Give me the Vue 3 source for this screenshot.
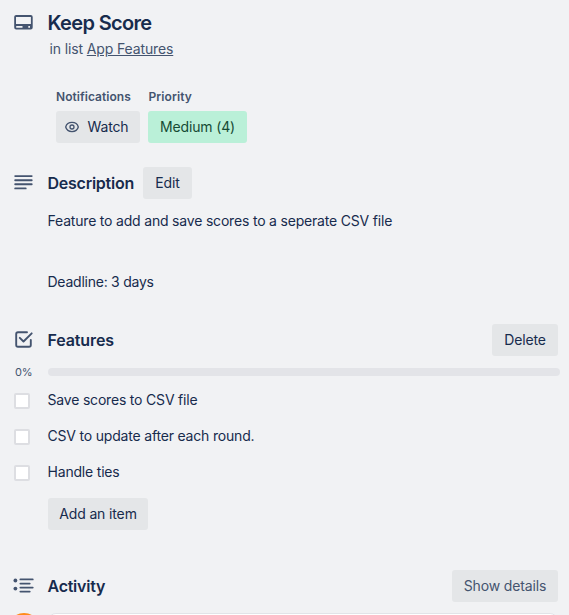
<script setup>
const items = ['Save scores to CSV file', 'CSV to update after each round.', 'Handle ties']
</script>

<template>
  <main class="card">
    <header class="head">
      <svg class="icon card-icon" viewBox="0 0 24 24" width="24" height="24">
        <path fill-rule="evenodd" d="M4.200 4h14.500a2 2 0 0 1 2 2v10.600a2 2 0 0 1-2 2H4.200a2 2 0 0 1-2-2V6c0-1.100.9-2 2-2Zm-.2 1.900v7.200h14.900V5.900H4Zm.2 9.100v1.700h6.300V15H4.200Zm12.100 0v1.700h1.700V15h-1.700Z" />
      </svg>
      <div>
        <h1><span>Keep Score</span></h1>
        <p class="sub"><span>in list <a>App Features</a></span></p>
      </div>
    </header>

    <section class="meta">
      <div>
        <h3><span>Notifications</span></h3>
        <button class="btn watch">
          <svg width="16" height="16" viewBox="0 0 16 16" fill="none" stroke="#44546f" stroke-width="1.300">
            <path d="M1.700 8C2.400 5.300 4.900 3.400 8 3.400S13.600 5.300 14.300 8C13.600 10.700 11.100 12.600 8 12.600S2.400 10.700 1.700 8Z" />
            <circle cx="8" cy="8" r="2" />
          </svg>
          <span>Watch</span>
        </button>
      </div>
      <div>
        <h3 class="l-prio"><span>Priority</span></h3>
        <div class="btn priority"><span>Medium (4)</span></div>
      </div>
    </section>

    <section class="row">
      <svg class="icon line lines" viewBox="0 0 24 24" width="24" height="24">
        <path d="M3.200 5.100H19.700M3.200 9.200H19.700M3.200 13.300H19.700M3.200 17.400H13.700" />
      </svg>
      <h2 class="t-desc"><span>Description</span></h2>
      <button class="btn edit"><span>Edit</span></button>
    </section>
    <div class="body">
      <p><span>Feature to add and save scores to a seperate CSV file</span></p>
      <p class="p2"><span>Deadline: 3 days</span></p>
    </div>

    <section class="row">
      <svg class="icon line" viewBox="0 0 24 24" width="24" height="24">
        <path d="M15 4.200H6C4.900 4.200 4.200 4.900 4.200 6V17C4.200 18.100 4.900 18.800 6 18.800H17C18.100 18.800 18.800 18.100 18.800 17V12M7.800 9.800L11.500 13.500L19.700 5.300" />
      </svg>
      <h2 class="t-feat"><span>Features</span></h2>
      <button class="btn delete"><span>Delete</span></button>
    </section>
    <div class="progress">
      <span class="pct">0%</span>
      <div class="track"></div>
    </div>
    <ul>
      <li v-for="item in items" :key="item">
        <i class="check"></i><span>{{ item }}</span>
      </li>
    </ul>
    <button class="btn add"><span>Add an item</span></button>

    <section class="row activity">
      <svg class="icon" viewBox="0 0 24 24" width="24" height="24">
        <circle cx="3.400" cy="6.500" r="1.900" /><circle cx="3.400" cy="14.600" r="1.900" />
        <path class="bars" d="M8.400 5.400H20.700M8.400 9.600H17.700M8.400 13.600H20.700M8.400 17.600H17.700" />
      </svg>
      <h2 class="t-act"><span>Activity</span></h2>
      <button class="btn details"><span>Show details</span></button>
    </section>
    <div class="comment">
      <div class="avatar"></div>
      <div class="box"></div>
    </div>
  </main>
</template>

<style>
body { background: #f1f2f4; }
</style>

<style scoped>
* { box-sizing: border-box; }
.card {
  width: 569px;
  height: 615px;
  overflow: hidden;
  background: #f1f2f4;
  color: #172b4d;
  font: 400 14px/20px Inter, "Liberation Sans", sans-serif;
  letter-spacing: -0.19px;
  white-space: nowrap;
}
h1, h2, h3, p, ul { margin: 0; padding: 0; }
.icon { fill: #44546f; flex: none; }
.icon.line { fill: none; stroke: #44546f; stroke-width: 1.9; stroke-linecap: round; stroke-linejoin: round; }
.bars { stroke: #44546f; stroke-width: 1.9; stroke-linecap: round; }
.head { display: flex; height: 90px; padding: 11px 0 0 12px; }
.head > div { margin-left: 11.5px; }
h1 { font-size: 20px; line-height: 24px; font-weight: 600; letter-spacing: -0.66px; }
.sub { margin: 4px 0 0 2px; color: #44546f; letter-spacing: -0.13px; }
.sub a { text-decoration: underline; }
.meta { display: flex; gap: 8px; padding-left: 56px; height: 77px; }
h3 { height: 21px; font-size: 12px; line-height: 14px; font-weight: 600; color: #44546f; letter-spacing: 0.04px; }
.l-prio { padding-left: 0.5px; letter-spacing: 0.1px; }
.btn {
  display: flex;
  align-items: center;
  justify-content: center;
  height: 32px;
  padding: 0;
  border: 0;
  border-radius: 3px;
  background: #e4e6e8;
  color: #172b4d;
  font: inherit;
  letter-spacing: -0.14px;
}
.watch { width: 84px; padding-right: 4px; gap: 8px; }
.priority { width: 99px; background: #baf0d8; color: #164b35; }
.row { display: flex; align-items: center; height: 32px; padding: 0 11px 0 12px; }
h2 { margin-left: 11.5px; font-size: 16px; line-height: 20px; font-weight: 600; letter-spacing: -0.25px; }
.t-feat { letter-spacing: -0.12px; }
.t-desc { width: 87.5px; }
.edit { width: 49px; margin-left: 8px; }
.body { height: 125px; padding: 12px 0 0 47.5px; }
.p2 { margin-top: 41px; letter-spacing: -0.24px; }
.delete { width: 66px; margin-left: auto; }
.progress { display: flex; align-items: center; height: 8px; margin-top: 12px; padding-right: 9px; }
.pct { width: 48px; padding-left: 15px; font-size: 11px; color: #44546f; letter-spacing: -0.3px; }
.track { flex: 1; height: 8px; border-radius: 4px; background: #e3e4e8; }
ul { list-style: none; margin-top: 6px; }
li { display: flex; align-items: center; height: 36px; }
.check { width: 16px; height: 16px; margin: 2px 17.5px 0 14px; border: 2px solid #dddee2; border-radius: 2px; background: #fff; }
.add { width: 100px; margin: 8px 0 0 48px; }
.activity { margin-top: 40px; }
.details { width: 106px; margin-left: auto; color: #44546f; }
.comment { display: flex; margin-top: 12px; }
.avatar { width: 32px; height: 32px; margin: -1px 8px 0 8px; border-radius: 50%; background: #ff8b1a; }
.box { width: 510px; height: 36px; margin-top: -1px; border: 1px solid #e2e4e8; border-radius: 8px; background: #fff; }
</style>
